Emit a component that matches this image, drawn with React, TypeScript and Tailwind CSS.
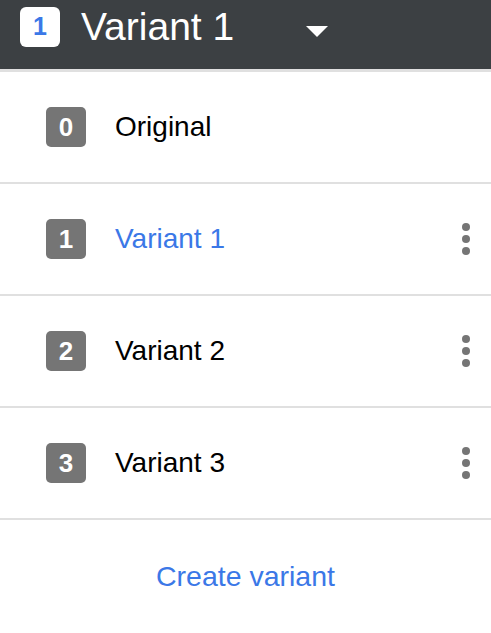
import React from 'react';

const variants = [
  { n: 0, name: 'Original', active: false, menu: false },
  { n: 1, name: 'Variant 1', active: true, menu: true },
  { n: 2, name: 'Variant 2', active: false, menu: true },
  { n: 3, name: 'Variant 3', active: false, menu: true },
];

const Kebab = () => (
  <div className="flex flex-col items-center gap-[4px]">
    <span className="w-[8px] h-[8px] rounded-full bg-[#757575]" />
    <span className="w-[8px] h-[8px] rounded-full bg-[#757575]" />
    <span className="w-[8px] h-[8px] rounded-full bg-[#757575]" />
  </div>
);

export default function App() {
  return (
    <div className="w-[491px] h-[633px] bg-white font-['Liberation_Sans',Arial,sans-serif] overflow-hidden">
      {/* Header */}
      <div className="h-[72px] bg-[#3c4043] border-b-[3px] border-[#e0e0e0] flex items-start pt-[7px] pl-[20px]">
        <div className="w-[40px] h-[40px] rounded-[6px] bg-white flex items-center justify-center text-[#3b78e7] text-[25px] font-bold">
          1
        </div>
        <span className="ml-[21px] text-white text-[39px] leading-[40px]">Variant 1</span>
        <svg className="ml-[72px] mt-[13px]" width="22" height="20" viewBox="0 0 22 20">
          <path d="M0 6 L22 6 L11 17 Z" fill="#ffffff" />
        </svg>
      </div>

      {/* Variant list */}
      {variants.map((v) => (
        <div
          key={v.n}
          className="h-[112px] border-b-2 border-[#e0e0e0] flex items-center pl-[46px] pr-[21px]"
        >
          <div className="w-[40px] h-[40px] rounded-[5px] bg-[#757575] flex items-center justify-center text-white text-[26px] font-bold">
            {v.n}
          </div>
          <span
            className={`ml-[29px] text-[28px] flex-1 ${v.active ? 'text-[#3b78e7]' : 'text-black'}`}
          >
            {v.name}
          </span>
          {v.menu && <Kebab />}
        </div>
      ))}

      {/* Footer */}
      <div className="h-[112px] flex items-center justify-center">
        <span className="text-[#3b78e7] text-[28.5px]">Create variant</span>
      </div>
    </div>
  );
}
